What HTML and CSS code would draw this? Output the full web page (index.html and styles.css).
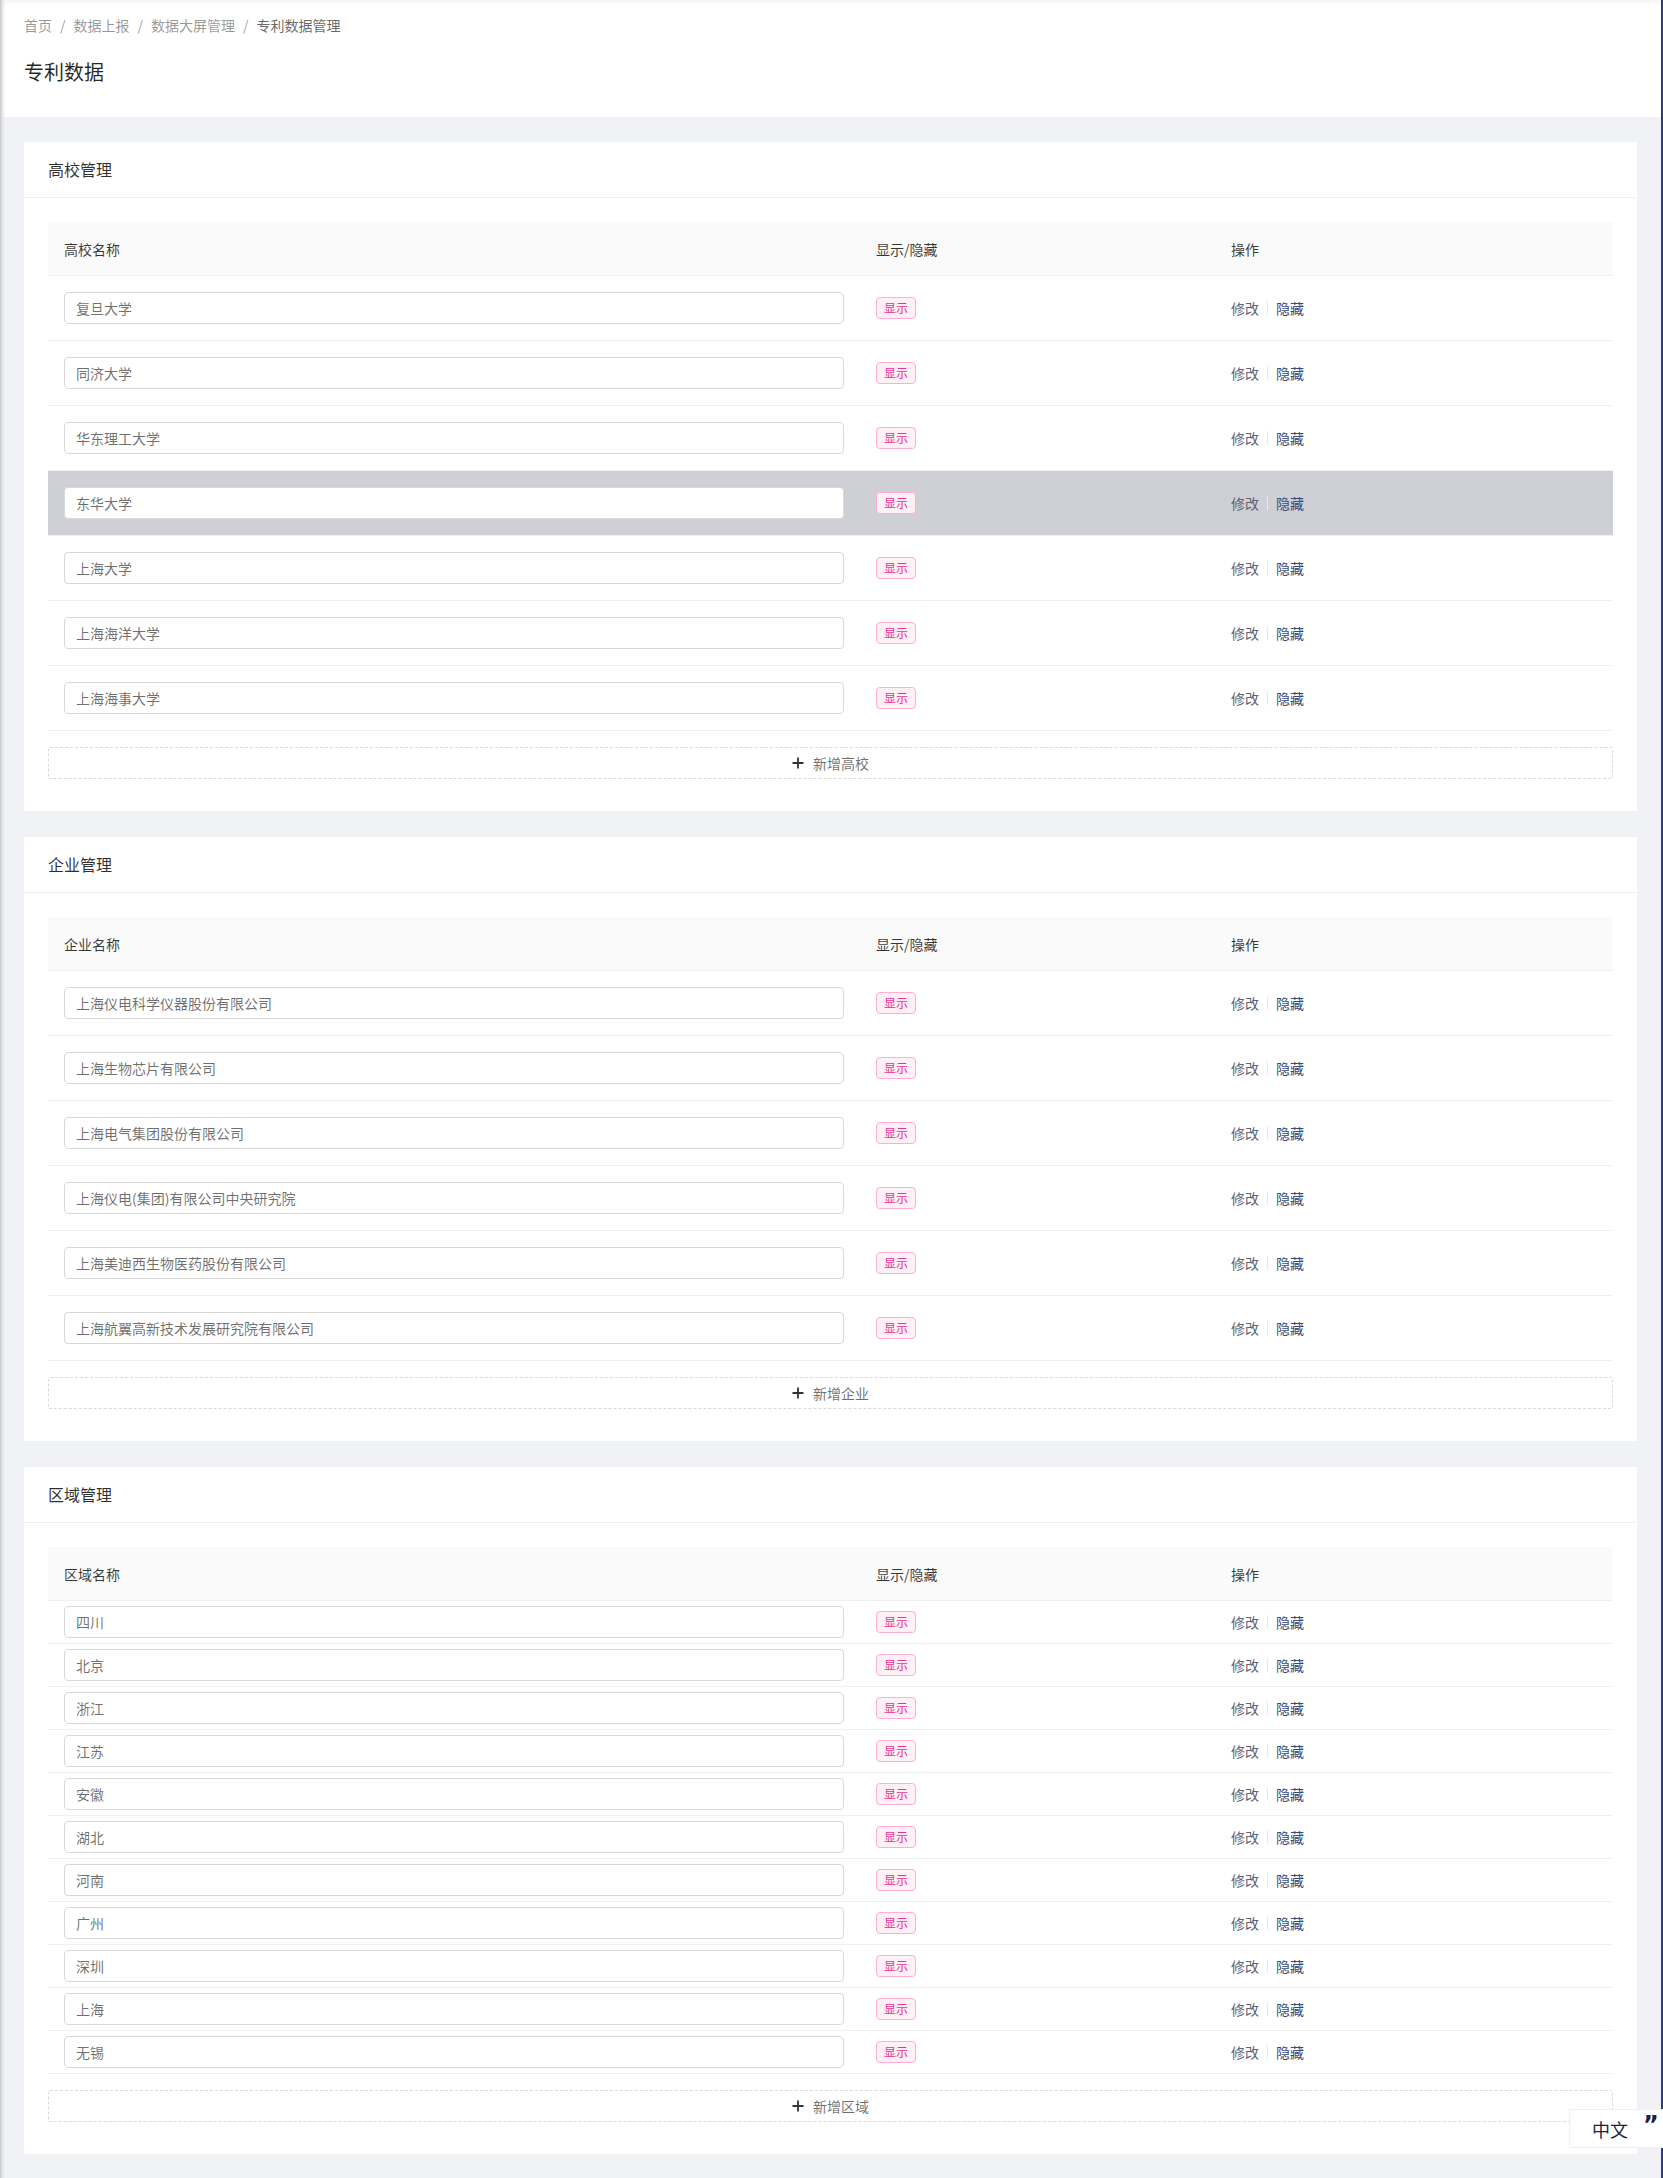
FILE: index.html
```html
<!DOCTYPE html>
<html lang="zh-CN">
<head>
<meta charset="utf-8">
<title>专利数据</title>
<link rel="stylesheet" href="styles.css">
</head>
<body>
<div class="app">
  <div class="main">
    <div class="edge-shadow"></div>
    <header class="page-header">
      <nav class="breadcrumb">
        <span class="crumb">首页</span><span class="sep">/</span>
        <span class="crumb">数据上报</span><span class="sep">/</span>
        <span class="crumb">数据大屏管理</span><span class="sep">/</span>
        <span class="crumb current">专利数据管理</span>
      </nav>
      <h1 class="page-title">专利数据</h1>
    </header>

    <section class="card card-first">
      <div class="card-head">高校管理</div>
      <div class="card-body">
        <div class="table">
          <div class="row head">
            <div class="cell c1">高校名称</div>
            <div class="cell c2">显示/隐藏</div>
            <div class="cell c3">操作</div>
          </div>
          <div class="row"><div class="cell c1"><div class="input">复旦大学</div></div><div class="cell c2"><span class="tag">显示</span></div><div class="cell c3"><span class="op edit">修改</span><span class="divider"></span><span class="op hide">隐藏</span></div></div>
          <div class="row"><div class="cell c1"><div class="input">同济大学</div></div><div class="cell c2"><span class="tag">显示</span></div><div class="cell c3"><span class="op edit">修改</span><span class="divider"></span><span class="op hide">隐藏</span></div></div>
          <div class="row"><div class="cell c1"><div class="input">华东理工大学</div></div><div class="cell c2"><span class="tag">显示</span></div><div class="cell c3"><span class="op edit">修改</span><span class="divider"></span><span class="op hide">隐藏</span></div></div>
          <div class="row hover"><div class="cell c1"><div class="input">东华大学</div></div><div class="cell c2"><span class="tag">显示</span></div><div class="cell c3"><span class="op edit">修改</span><span class="divider"></span><span class="op hide">隐藏</span></div></div>
          <div class="row"><div class="cell c1"><div class="input">上海大学</div></div><div class="cell c2"><span class="tag">显示</span></div><div class="cell c3"><span class="op edit">修改</span><span class="divider"></span><span class="op hide">隐藏</span></div></div>
          <div class="row"><div class="cell c1"><div class="input">上海海洋大学</div></div><div class="cell c2"><span class="tag">显示</span></div><div class="cell c3"><span class="op edit">修改</span><span class="divider"></span><span class="op hide">隐藏</span></div></div>
          <div class="row"><div class="cell c1"><div class="input">上海海事大学</div></div><div class="cell c2"><span class="tag">显示</span></div><div class="cell c3"><span class="op edit">修改</span><span class="divider"></span><span class="op hide">隐藏</span></div></div>
        </div>
        <div class="add-btn"><svg class="plus" width="12" height="12" viewBox="0 0 12 12"><path d="M6 0.5V11.5M0.5 6H11.5" stroke="#333" stroke-width="1.8"/></svg><span>新增高校</span></div>
      </div>
    </section>

    <section class="card">
      <div class="card-head">企业管理</div>
      <div class="card-body">
        <div class="table">
          <div class="row head">
            <div class="cell c1">企业名称</div>
            <div class="cell c2">显示/隐藏</div>
            <div class="cell c3">操作</div>
          </div>
          <div class="row"><div class="cell c1"><div class="input">上海仪电科学仪器股份有限公司</div></div><div class="cell c2"><span class="tag">显示</span></div><div class="cell c3"><span class="op edit">修改</span><span class="divider"></span><span class="op hide">隐藏</span></div></div>
          <div class="row"><div class="cell c1"><div class="input">上海生物芯片有限公司</div></div><div class="cell c2"><span class="tag">显示</span></div><div class="cell c3"><span class="op edit">修改</span><span class="divider"></span><span class="op hide">隐藏</span></div></div>
          <div class="row"><div class="cell c1"><div class="input">上海电气集团股份有限公司</div></div><div class="cell c2"><span class="tag">显示</span></div><div class="cell c3"><span class="op edit">修改</span><span class="divider"></span><span class="op hide">隐藏</span></div></div>
          <div class="row"><div class="cell c1"><div class="input">上海仪电(集团)有限公司中央研究院</div></div><div class="cell c2"><span class="tag">显示</span></div><div class="cell c3"><span class="op edit">修改</span><span class="divider"></span><span class="op hide">隐藏</span></div></div>
          <div class="row"><div class="cell c1"><div class="input">上海美迪西生物医药股份有限公司</div></div><div class="cell c2"><span class="tag">显示</span></div><div class="cell c3"><span class="op edit">修改</span><span class="divider"></span><span class="op hide">隐藏</span></div></div>
          <div class="row"><div class="cell c1"><div class="input">上海航翼高新技术发展研究院有限公司</div></div><div class="cell c2"><span class="tag">显示</span></div><div class="cell c3"><span class="op edit">修改</span><span class="divider"></span><span class="op hide">隐藏</span></div></div>
        </div>
        <div class="add-btn"><svg class="plus" width="12" height="12" viewBox="0 0 12 12"><path d="M6 0.5V11.5M0.5 6H11.5" stroke="#333" stroke-width="1.8"/></svg><span>新增企业</span></div>
      </div>
    </section>

    <section class="card">
      <div class="card-head">区域管理</div>
      <div class="card-body">
        <div class="table compact">
          <div class="row head">
            <div class="cell c1">区域名称</div>
            <div class="cell c2">显示/隐藏</div>
            <div class="cell c3">操作</div>
          </div>
          <div class="row"><div class="cell c1"><div class="input">四川</div></div><div class="cell c2"><span class="tag">显示</span></div><div class="cell c3"><span class="op edit">修改</span><span class="divider"></span><span class="op hide">隐藏</span></div></div>
          <div class="row"><div class="cell c1"><div class="input">北京</div></div><div class="cell c2"><span class="tag">显示</span></div><div class="cell c3"><span class="op edit">修改</span><span class="divider"></span><span class="op hide">隐藏</span></div></div>
          <div class="row"><div class="cell c1"><div class="input">浙江</div></div><div class="cell c2"><span class="tag">显示</span></div><div class="cell c3"><span class="op edit">修改</span><span class="divider"></span><span class="op hide">隐藏</span></div></div>
          <div class="row"><div class="cell c1"><div class="input">江苏</div></div><div class="cell c2"><span class="tag">显示</span></div><div class="cell c3"><span class="op edit">修改</span><span class="divider"></span><span class="op hide">隐藏</span></div></div>
          <div class="row"><div class="cell c1"><div class="input">安徽</div></div><div class="cell c2"><span class="tag">显示</span></div><div class="cell c3"><span class="op edit">修改</span><span class="divider"></span><span class="op hide">隐藏</span></div></div>
          <div class="row"><div class="cell c1"><div class="input">湖北</div></div><div class="cell c2"><span class="tag">显示</span></div><div class="cell c3"><span class="op edit">修改</span><span class="divider"></span><span class="op hide">隐藏</span></div></div>
          <div class="row"><div class="cell c1"><div class="input">河南</div></div><div class="cell c2"><span class="tag">显示</span></div><div class="cell c3"><span class="op edit">修改</span><span class="divider"></span><span class="op hide">隐藏</span></div></div>
          <div class="row"><div class="cell c1"><div class="input">广州</div></div><div class="cell c2"><span class="tag">显示</span></div><div class="cell c3"><span class="op edit">修改</span><span class="divider"></span><span class="op hide">隐藏</span></div></div>
          <div class="row"><div class="cell c1"><div class="input">深圳</div></div><div class="cell c2"><span class="tag">显示</span></div><div class="cell c3"><span class="op edit">修改</span><span class="divider"></span><span class="op hide">隐藏</span></div></div>
          <div class="row"><div class="cell c1"><div class="input">上海</div></div><div class="cell c2"><span class="tag">显示</span></div><div class="cell c3"><span class="op edit">修改</span><span class="divider"></span><span class="op hide">隐藏</span></div></div>
          <div class="row"><div class="cell c1"><div class="input">无锡</div></div><div class="cell c2"><span class="tag">显示</span></div><div class="cell c3"><span class="op edit">修改</span><span class="divider"></span><span class="op hide">隐藏</span></div></div>
        </div>
        <div class="add-btn"><svg class="plus" width="12" height="12" viewBox="0 0 12 12"><path d="M6 0.5V11.5M0.5 6H11.5" stroke="#333" stroke-width="1.8"/></svg><span>新增区域</span></div>
      </div>
    </section>

    <div class="lang-switch"><span class="lang-text">中文</span><span class="lang-quote">”</span></div>
  </div>
  <div class="rail"></div>
</div>
</body>
</html>
```

FILE: styles.css
```css
* { box-sizing: border-box; }
html, body { margin: 0; padding: 0; }
body {
  font-family: "Noto Sans CJK SC", "Noto Sans", "Liberation Sans", sans-serif;
  font-size: 14px;
  color: rgba(0,0,0,0.85);
  background: #f0f2f5;
}
.app {
  display: flex;
  min-height: 2178px;
}
.main {
  flex: 1;
  position: relative;
  background: #f0f2f5;
  padding-bottom: 24px;
}
.rail {
  width: 2px;
  background: #2f3b7e;
}
.edge-shadow {
  position: absolute;
  left: 0; top: 0; bottom: 0;
  width: 5px;
  background: linear-gradient(to right, #c3c6cc 0, #dfe1e5 2px, rgba(240,242,245,0) 5px);
  z-index: 5;
}
.page-header {
  background: #fff;
  height: 117px;
  padding: 14px 24px 0;
  box-shadow: inset 0 5px 5px -3px rgba(0,0,0,0.06);
}
.breadcrumb {
  font-size: 14px;
  line-height: 22px;
  color: rgba(0,0,0,0.42);
  display: flex;
  align-items: center;
}
.breadcrumb .sep { margin: 0 8px; }
.breadcrumb .current { color: rgba(0,0,0,0.62); }
.page-title {
  margin: 22px 0 0;
  font-size: 20px;
  line-height: 28px;
  font-weight: 400;
  color: rgba(0,0,0,0.85);
}
.card {
  background: #fff;
  margin: 26px 24px 0;
}
.card-first { margin-top: 25px; }
.card-head {
  height: 56px;
  line-height: 55px;
  padding: 0 24px;
  font-size: 16px;
  color: rgba(0,0,0,0.82);
  border-bottom: 1px solid #f0f0f0;
}
.card-body {
  padding: 24px 24px 24px;
}
.table {
  display: flex;
  flex-direction: column;
}
.row {
  display: flex;
  align-items: center;
  border-bottom: 1px solid #f0f0f0;
  height: 65px;
}
.row.head {
  height: 54px;
  background: #fafafa;
  border-radius: 2px 2px 0 0;
  color: rgba(0,0,0,0.78);
}
.table.compact .row { height: 43px; }
.table.compact .row.head { height: 54px; }
.row.hover { background: #cfd0d5; }
.cell {
  padding: 0 16px;
  display: flex;
  align-items: center;
}
.c1 { width: 812px; }
.c2 { width: 355px; }
.c3 { flex: 1; }
.input {
  width: 100%;
  height: 32px;
  border: 1px solid #d9d9d9;
  border-radius: 4px;
  background: #fff;
  padding: 0 11px;
  line-height: 30px;
  font-size: 14px;
  color: rgba(0,0,0,0.58);
}
.tag {
  display: inline-block;
  height: 22px;
  line-height: 20px;
  padding: 0 7px;
  font-size: 12px;
  border: 1px solid #ffadd2;
  background: #fff0f6;
  color: #eb2f96;
  border-radius: 4px;
}
.op { font-size: 14px; line-height: 22px; }
.op.edit { color: #5f6270; }
.op.hide { color: #3a4a7a; }
.divider {
  display: inline-block;
  width: 1px;
  height: 14px;
  background: #e8e8e8;
  margin: 0 8px;
}
.add-btn {
  margin-top: 16px;
  margin-bottom: 8px;
  height: 32px;
  border: 1px dashed #d9d9d9;
  border-radius: 2px;
  display: flex;
  align-items: center;
  justify-content: center;
  gap: 9px;
  color: rgba(0,0,0,0.58);
  font-size: 14px;
}
.plus { display: block; }
.lang-switch {
  position: absolute;
  right: -2px;
  top: 2109px;
  width: 94px;
  height: 39px;
  background: #fff;
  border: 1px solid #eef0f4;
  border-right: none;
  display: flex;
  align-items: center;
  padding-left: 22px;
  z-index: 10;
}
.lang-text {
  font-size: 18px;
  color: #1b2240;
  line-height: 24px;
}
.lang-quote {
  font-family: "DejaVu Sans", "Liberation Sans", sans-serif;
  font-weight: 700;
  font-size: 24px;
  color: #1b2240;
  margin-left: 15px;
  align-self: flex-start;
  line-height: 20px;
  margin-top: 5px;
}
```
